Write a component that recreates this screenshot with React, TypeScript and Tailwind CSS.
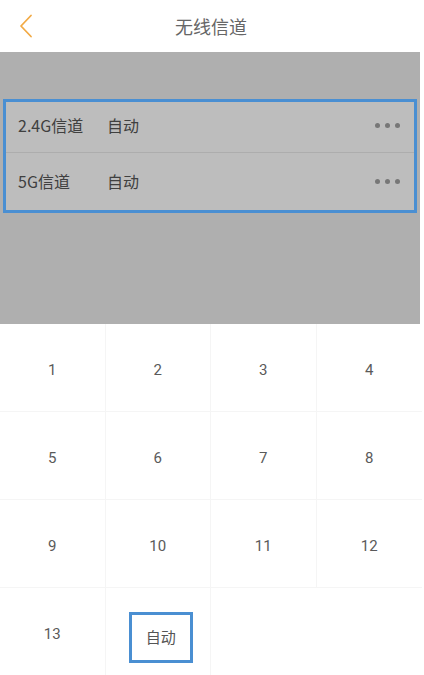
const cells = ['1', '2', '3', '4', '5', '6', '7', '8', '9', '10', '11', '12', '13'];

function Dots() {
  return (
    <div className="flex gap-[5px] mr-[14px]">
      <span className="w-[5px] h-[5px] rounded-full bg-[#777]" />
      <span className="w-[5px] h-[5px] rounded-full bg-[#777]" />
      <span className="w-[5px] h-[5px] rounded-full bg-[#777]" />
    </div>
  );
}

function Row({ label, value, last }: { label: string; value: string; last?: boolean }) {
  return (
    <div className={`flex items-center ${last ? 'h-[57px] pb-[1px]' : 'h-[51px] pb-[4px] border-b border-[#adadad]'}`}>
      <span className="w-[101px] pl-[12px] text-[#404040]">{label}</span>
      <span className="flex-1 text-[#404040]">{value}</span>
      <Dots />
    </div>
  );
}

export default function App() {
  return (
    <div
      className="w-[424px] h-[675px] bg-white overflow-hidden text-[16px]"
      style={{ fontFamily: '"Noto Sans CJK SC", Roboto, sans-serif' }}
    >
      <div className="w-[422px]">
        <div className="h-[52px] flex items-center relative">
          <svg className="ml-[19px]" width="14" height="24" viewBox="0 0 14 24" fill="none">
            <path d="M12 1.5 L2 12 L12 22.5" stroke="#f2aa45" strokeWidth="1.8" strokeLinecap="round" strokeLinejoin="round" />
          </svg>
          <div className="absolute inset-0 flex items-center justify-center text-[18px] text-[#666]">无线信道</div>
        </div>
        <div className="w-[420px] h-[272px] bg-[#afafaf] pt-[47px]">
          <div className="mx-[3px] border-[3px] border-[#4a8fd2] bg-[#bdbdbd]">
            <Row label="2.4G信道" value="自动" />
            <Row label="5G信道" value="自动" last />
          </div>
        </div>
        <div className="grid grid-cols-4">
          {cells.map((c, i) => (
            <div
              key={c}
              className={`h-[88px] pt-[5px] flex items-center justify-center text-[15px] text-[#5a5a5a] border-b border-[#f5f5f5] ${i % 4 === 3 ? '' : 'border-r'}`}
              style={{ fontFamily: 'Roboto, sans-serif' }}
            >
              {c}
            </div>
          ))}
          <div className="h-[88px] flex justify-center border-r border-[#f5f5f5]">
            <div className="ml-[6px] mt-[24px] w-[64px] h-[51px] border-[3px] border-[#4a8fd2] flex items-center justify-center text-[15px] text-[#555]">
              自动
            </div>
          </div>
        </div>
      </div>
    </div>
  );
}
